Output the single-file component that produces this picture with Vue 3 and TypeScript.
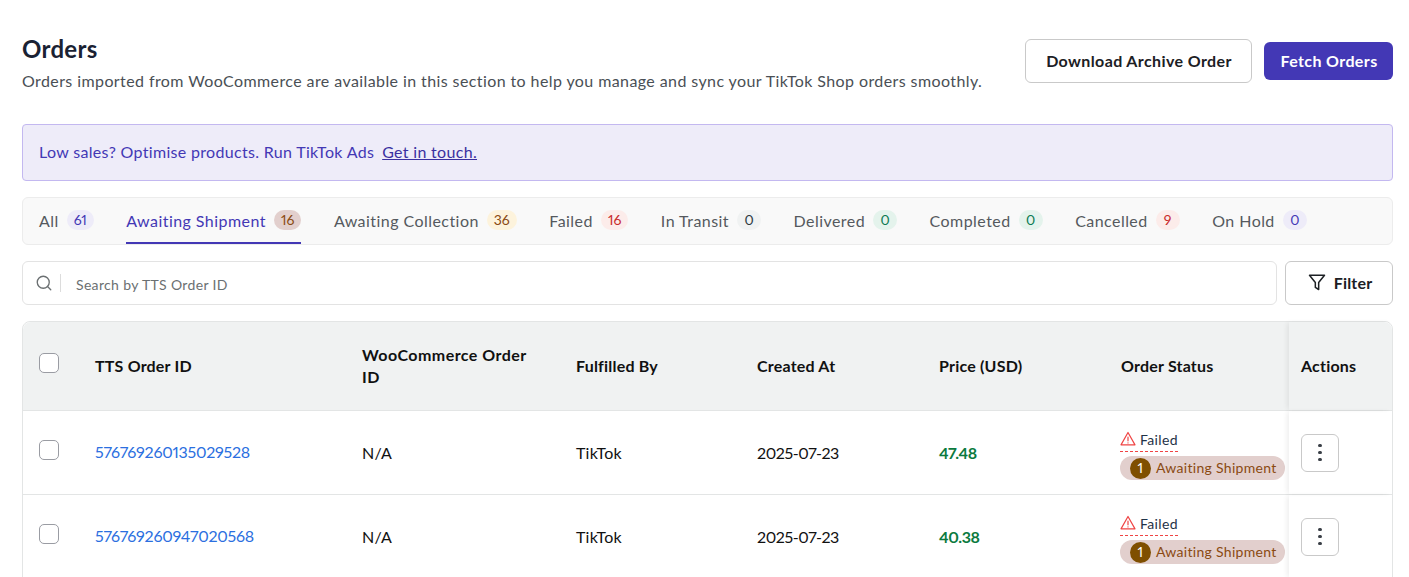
<script setup lang="ts">
interface Tab { label: string; count: number; tone: string }
const tabs: Tab[] = [
  { label: 'All', count: 61, tone: 'purple' },
  { label: 'Awaiting Shipment', count: 16, tone: 'brown' },
  { label: 'Awaiting Collection', count: 36, tone: 'amber' },
  { label: 'Failed', count: 16, tone: 'red' },
  { label: 'In Transit', count: 0, tone: 'grey' },
  { label: 'Delivered', count: 0, tone: 'green' },
  { label: 'Completed', count: 0, tone: 'green' },
  { label: 'Cancelled', count: 9, tone: 'red' },
  { label: 'On Hold', count: 0, tone: 'purple' },
]
const orders = [
  { id: '576769260135029528', price: '47.48' },
  { id: '576769260947020568', price: '40.38' },
]
</script>

<template>
  <main class="page">
    <header class="head">
      <div class="intro">
        <h1>Orders</h1>
        <p>Orders imported from WooCommerce are available in this section to help you manage and sync your TikTok Shop orders smoothly.</p>
      </div>
      <div class="head-actions">
        <button class="btn outline">Download Archive Order</button>
        <button class="btn primary">Fetch Orders</button>
      </div>
    </header>

    <div class="banner"><span>Low sales? Optimise products. Run TikTok Ads</span> <a>Get in touch.</a></div>

    <nav class="tabs">
      <div v-for="t in tabs" :key="t.label" class="tab" :class="{ active: t.label === 'Awaiting Shipment' }">
        <span>{{ t.label }}</span>
        <span class="count" :class="t.tone">{{ t.count }}</span>
      </div>
    </nav>

    <div class="tools">
      <div class="search">
        <svg class="search-ic" width="18" height="18" viewBox="0 0 24 24" fill="none" stroke="#6b7072" stroke-width="1.8" stroke-linecap="round"><circle cx="11" cy="11" r="8"/><path d="m21 21-4.3-4.3"/></svg>
        <span class="sep"></span>
        <span class="placeholder">Search by TTS Order ID</span>
      </div>
      <button class="filter">
        <svg width="20" height="20" viewBox="0 0 24 24" fill="none" stroke="#1c2024" stroke-width="1.8" stroke-linejoin="round"><path d="M3 4h18l-7 8.5V21l-4-2.5v-6z"/></svg>
        Filter
      </button>
    </div>

    <section class="table">
      <div class="row header">
        <div class="cell c-check"><span class="check"></span></div>
        <div class="cell">TTS Order ID</div>
        <div class="cell c-woo">WooCommerce Order ID</div>
        <div class="cell">Fulfilled By</div>
        <div class="cell">Created At</div>
        <div class="cell">Price (USD)</div>
        <div class="cell">Order Status</div>
        <div class="cell c-actions">Actions</div>
      </div>
      <div v-for="o in orders" :key="o.id" class="row body">
        <div class="cell c-check"><span class="check"></span></div>
        <div class="cell"><a class="order-link">{{ o.id }}</a></div>
        <div class="cell">N/A</div>
        <div class="cell">TikTok</div>
        <div class="cell date">2025-07-23</div>
        <div class="cell price">{{ o.price }}</div>
        <div class="cell status">
          <span class="failed">
            <svg class="warn" width="16" height="15" viewBox="0 0 24 22" fill="none" stroke="#ef4444" stroke-width="1.8" stroke-linejoin="round" stroke-linecap="round"><path d="M12 2 1.5 20.5h21z"/><path d="M12 9v5.5M12 17.5v.2"/></svg>
            <span>Failed</span>
          </span>
          <span class="await"><b>1</b>Awaiting Shipment</span>
        </div>
        <div class="cell c-actions">
          <button class="more" aria-label="More"><i></i><i></i><i></i></button>
        </div>
      </div>
    </section>
  </main>
</template>

<style>
html, body { margin: 0; background: #fff; overflow: hidden; }
</style>

<style scoped>
* { box-sizing: border-box; }
.page {
  font-family: "Lato", "Noto Sans", sans-serif;
  font-variant-numeric: proportional-nums;
  padding: 34px 16px 0 22px;
  color: #1c2024;
  height: 577px;
  overflow: hidden;
}
.head { display: flex; justify-content: space-between; align-items: flex-start; height: 90px; }
h1 { margin: 0; font-size: 24px; line-height: 30px; font-weight: 700; color: #1a2233; letter-spacing: .3px; }
.intro p { margin: 5px 0 0; font-size: 16px; line-height: 24px; color: #4a4f55; letter-spacing: .405px; }
.head-actions { display: flex; gap: 12px; align-items: center; padding-top: 5px; }
.btn { font-family: inherit; font-size: 16px; font-weight: 700; border-radius: 6px; letter-spacing: .39px; padding: 0 0 2px 1px; }
.outline { width: 227px; height: 44px; background: #fff; border: 1px solid #c9c9c9; color: #1c2024; }
.primary { width: 129px; height: 38px; background: #4338b5; border: 0; color: #fff; }
.banner {
  height: 57px; display: flex; align-items: center; gap: 8px;
  background: #eeecf9; border: 1px solid #c3b8f0; border-radius: 4px;
  padding: 0 16px 2px; font-size: 16px; color: #4338b5; letter-spacing: .32px;
}
.banner a { color: #3a30a0; text-decoration: underline; }
.tabs {
  margin-top: 16px; height: 48px; display: flex; gap: 32.5px; padding: 0 16px;
  background: #f9f9f9; border: 1px solid #ececec; border-radius: 6px;
  font-size: 16px; color: #55595e; letter-spacing: .45px;
}
.tab { display: flex; align-items: center; gap: 8px; height: 46px; border-bottom: 2px solid transparent; }
.tab.active { color: #4338b5; border-bottom-color: #4338b5; }
.count {
  height: 20px; min-width: 24px; padding: 0 7px; border-radius: 10px; font-size: 14px; line-height: 20px; text-align: center; letter-spacing: 0;
}
.purple { background: #eeecf9; color: #4338b5; }
.brown { background: #e2cfcd; color: #8a4a12; }
.amber { background: #fdf3dc; color: #8a4a12; }
.red { background: #fcecea; color: #c92a2a; }
.grey { background: #f0f2f2; color: #2b3a42; }
.green { background: #e4f3ec; color: #0b7a52; }
.tools { margin-top: 16px; display: flex; gap: 8px; height: 44px; }
.search {
  flex: 1; display: flex; align-items: center; background: #fff;
  border: 1px solid #e3e3e3; border-radius: 6px; padding-left: 12px;
}
.sep { width: 1px; height: 18px; background: #dcdcdc; margin: 0 15px 0 7px; }
.placeholder { font-size: 14px; color: #6b7072; letter-spacing: .34px; padding-top: 2px; }
.filter {
  width: 108px; display: flex; align-items: center; justify-content: center; gap: 7px;
  background: #fff; border: 1px solid #c9c9c9; border-radius: 6px;
  font-family: inherit; font-size: 16px; font-weight: 700; color: #1c2024; letter-spacing: .2px;
  padding: 0 0 2px 1px;
}
.table { margin-top: 16px; border: 1px solid #e3e5e5; border-radius: 8px 8px 0 0; }
.row {
  display: grid; grid-template-columns: 72px 267px 214px 181px 182px 182px 168px 1fr;
  border-bottom: 1px solid #e3e5e5; font-size: 16px; letter-spacing: .2px; color: #111;
}
.row.header { height: 89px; background: #f0f2f2; font-weight: 700; border-radius: 8px 8px 0 0; }
.row.body { height: 84px; }
.cell { display: flex; align-items: center; line-height: 22px; padding-right: 14px; }
.c-woo { max-width: 180px; letter-spacing: .45px; }
.c-check { padding-left: 16px; }
.check { width: 20px; height: 20px; border: 1px solid #9a9ca3; border-radius: 5px; background: #fff; margin-top: -6px; }
.order-link { color: #2b6fe0; font-size: 16px; margin-top: -2px; letter-spacing: -.25px; }
.date { letter-spacing: -.4px; }
.price { color: #0b7a3e; font-weight: 700; letter-spacing: -.4px; }
.status { flex-direction: column; align-items: flex-start; justify-content: center; gap: 4px; padding: 6px 0 0; margin-left: -1px; white-space: nowrap; letter-spacing: .2px; }
.failed {
  display: inline-flex; align-items: center; gap: 4px; font-size: 14px; line-height: 20px; color: #1f3348;
  border-bottom: 1px dashed #ef4444; height: 21px; letter-spacing: .35px;
}
.failed span { margin-top: -2px; }
.warn { margin-top: -5px; }
.await {
  display: inline-flex; align-items: center; gap: 5px; height: 24px; border-radius: 12px; padding: 0 8px 0 10px;
  background: #e2cfcd; color: #8a4a12; font-size: 14px; letter-spacing: .3px;
}
.await b {
  width: 21px; height: 21px; border-radius: 50%; background: #7f4f00; color: #fff; font-weight: 400;
  display: flex; align-items: center; justify-content: center; font-size: 14px;
}
.c-actions { padding-left: 12px; box-shadow: -3px 0 5px -1px rgba(0, 0, 0, .07); }
.more {
  width: 38px; height: 38px; background: #fff; border: 1px solid #c9c9c9; border-radius: 6px;
  display: flex; flex-direction: column; align-items: center; justify-content: center; gap: 3.5px; padding: 0;
}
.more i { width: 3.4px; height: 3.4px; border-radius: 50%; background: #3a3f46; }
</style>
